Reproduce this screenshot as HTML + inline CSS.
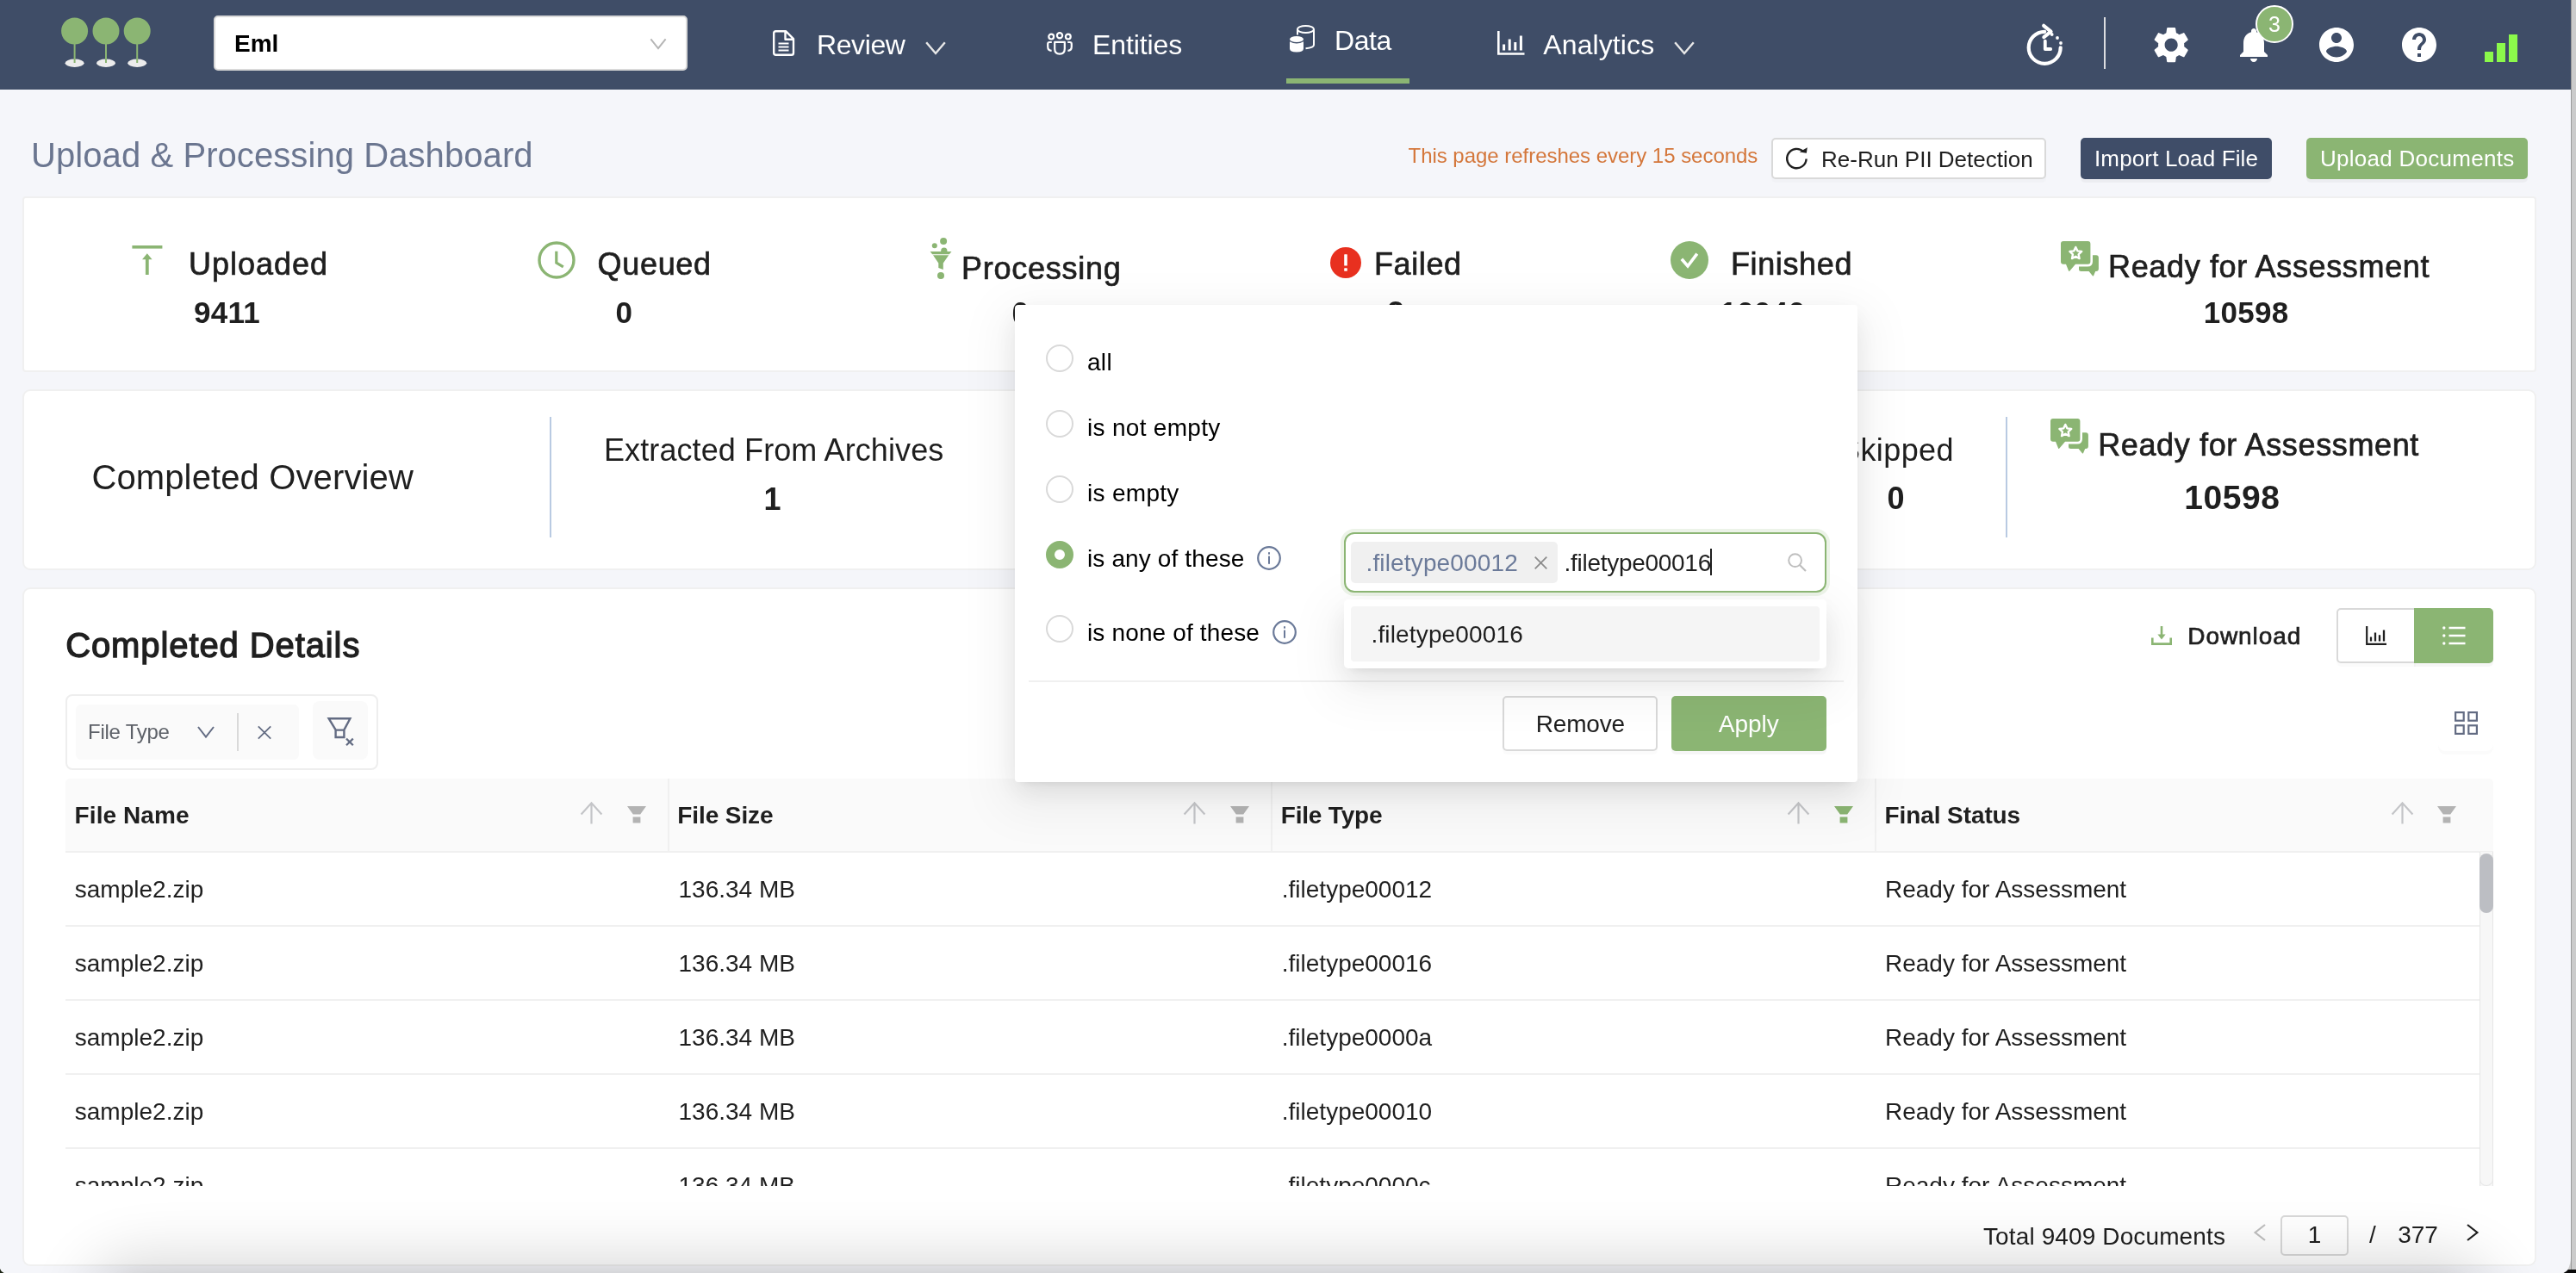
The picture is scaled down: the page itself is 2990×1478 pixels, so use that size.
<!DOCTYPE html>
<html lang="en">
<head>
<meta charset="utf-8">
<title>Upload &amp; Processing Dashboard</title>
<style>
*{box-sizing:border-box;margin:0;padding:0}
html,body{width:2990px;height:1478px;overflow:hidden;background:#f5f6fa}
body{position:relative;font-family:"Liberation Sans",Arial,Helvetica,sans-serif;color:#1f1f1f;-webkit-font-smoothing:antialiased}
.a{position:absolute;white-space:nowrap}
.t{position:absolute;white-space:nowrap;line-height:1}
svg{position:absolute;overflow:visible}
#nav{left:0;top:0;width:2990px;height:104px;background:#3f4d67}
.nt{font-size:32px;color:#fff}
.card{background:#fff;border:2px solid #eeeeef;border-radius:10px}
.lbl{font-size:36px;color:#1f1f1f}
.val{font-size:36px;font-weight:700;color:#1f1f1f}
.th{font-size:28px;font-weight:700;color:#1f1f1f}
.td{font-size:28px;color:#1f1f1f}
.rl{height:2px;background:#ededed;left:77px;width:2801px}
.opt{font-size:28px;color:#1f1f1f}
.radio{width:32px;height:32px;border-radius:50%;border:2px solid #d9d9d9;background:#fff}
</style>
</head>
<body>

<div id="wrap" class="a" style="left:0;top:0;width:2990px;height:1478px;will-change:transform">
<div id="nav" class="a"></div>

<svg style="left:0px;top:0px" width="200" height="104" viewBox="0 0 200 104" ><ellipse cx="86.6" cy="73.3" rx="11" ry="4.7" fill="#ececec"/><rect x="85.6" y="50" width="2" height="23" fill="#8bb573"/><circle cx="86.6" cy="36" r="15.5" fill="#8bb573"/><ellipse cx="123" cy="73.3" rx="11" ry="4.7" fill="#ececec"/><rect x="122" y="50" width="2" height="23" fill="#8bb573"/><circle cx="123" cy="36" r="15.5" fill="#8bb573"/><ellipse cx="159.2" cy="73.3" rx="11" ry="4.7" fill="#ececec"/><rect x="158.2" y="50" width="2" height="23" fill="#8bb573"/><circle cx="159.2" cy="36" r="15.5" fill="#8bb573"/></svg>
<div class="a" style="left:248px;top:18px;width:550px;height:64px;background:#fff;border:2px solid #d9d9d9;border-radius:5px"></div>
<div class="t" style="left:272px;top:37.3px;font-size:28px;font-weight:700;color:#000;">Eml</div>
<svg style="left:754px;top:43.5px" width="20" height="14.5" viewBox="0 0 22 16" ><path d="M1.5 1.5 L11 13.5 L20.5 1.5" fill="none" stroke="#b5b5b5" stroke-width="2.2"/></svg>
<svg style="left:897px;top:35px" width="26" height="30" viewBox="0 0 26 30" ><path d="M3.5 1.2 H15 L24 10.2 V26.5 Q24 28.8 21.7 28.8 H3.5 Q1.2 28.8 1.2 26.5 V3.5 Q1.2 1.2 3.5 1.2 Z M14.5 1.5 V10.8 H23.8" fill="none" stroke="#fff" stroke-width="2.4" stroke-linejoin="round"/><path d="M6.5 15.5 H18.5 M6.5 19.5 H18.5 M6.5 23.5 H18.5" stroke="#fff" stroke-width="2.2" fill="none"/></svg>
<div class="t" style="left:948px;top:35.9px;font-size:32px;color:#ffffff;letter-spacing:-0.4px">Review</div>
<svg style="left:1074px;top:48px" width="24" height="16" viewBox="0 0 24 16" ><path d="M1.2 1.2 L12 14 L22.8 1.2" fill="none" stroke="#e8e8e8" stroke-width="2.4"/></svg>
<svg style="left:1215px;top:37px" width="30" height="27" viewBox="0 0 30 27" ><g fill="none" stroke="#fff" stroke-width="2.2"><circle cx="5.2" cy="5.6" r="2.9"/><circle cx="15" cy="4.2" r="3.1"/><circle cx="24.8" cy="5.6" r="2.9"/><path d="M9.2 11.8 H20.8 V19.5 Q20.8 25.6 15 25.6 Q9.2 25.6 9.2 19.5 Z" stroke-linejoin="round"/><path d="M5.8 12 H3.2 Q1.2 12 1.2 14 V17.2 Q1.2 21.6 5.6 21.9"/><path d="M24.2 12 H26.8 Q28.8 12 28.8 14 V17.2 Q28.8 21.6 24.4 21.9"/></g></svg>
<div class="t" style="left:1268px;top:35.9px;font-size:32px;color:#ffffff;letter-spacing:-0.1px">Entities</div>
<svg style="left:1496px;top:29px" width="31" height="33" viewBox="0 0 31 33" ><g fill="none" stroke="#fff" stroke-width="2"><ellipse cx="19.5" cy="5" rx="9.5" ry="4"/><path d="M10 5 V11.5 M29 5 V23 Q29 26.5 19.5 27.2"/></g><g fill="#fff"><ellipse cx="9" cy="16.5" rx="8" ry="3.6"/><path d="M1 19.2 Q9 23.6 17 19.2 V27.6 Q17 31.5 9 31.5 Q1 31.5 1 27.6 Z"/></g></svg>
<div class="t" style="left:1549px;top:30.9px;font-size:32px;color:#ffffff;letter-spacing:-0.4px">Data</div>
<div class="a" style="left:1493px;top:91px;width:143px;height:6px;background:#8bb573"></div>
<svg style="left:1738px;top:36px" width="32" height="28" viewBox="0 0 32 28" ><path d="M1.3 0 V26.5 H31.5" fill="none" stroke="#fff" stroke-width="2.6"/><path d="M7.6 15.5 V22.5 M14.2 9.5 V22.5 M20.8 13 V22.5 M27.4 5.5 V22.5" stroke="#fff" stroke-width="3" fill="none"/></svg>
<div class="t" style="left:1791.3px;top:35.9px;font-size:32px;color:#ffffff;letter-spacing:0.1px">Analytics</div>
<svg style="left:1943px;top:48px" width="24" height="16" viewBox="0 0 24 16" ><path d="M1.2 1.2 L12 14 L22.8 1.2" fill="none" stroke="#e8e8e8" stroke-width="2.4"/></svg>
<svg style="left:2350px;top:27px" width="44" height="50" viewBox="0 0 44 50" ><g fill="none" stroke="#fff" stroke-width="4.2" stroke-linecap="round" stroke-linejoin="round"><path d="M23.2 9.8 A18.5 18.5 0 1 0 41.7 28.3"/><path d="M22.2 2.8 L30.5 9.6 L22.4 16.1"/><path d="M23.8 20.6 V30 H30.2" stroke-width="3.8"/></g><g fill="#fff"><circle cx="31.7" cy="13" r="1.9"/><circle cx="38" cy="17" r="1.9"/><circle cx="42" cy="23" r="1.9"/></g></svg>
<div class="a" style="left:2442px;top:20px;width:2px;height:60px;background:#dcdde0"></div>
<svg style="left:2494.65px;top:26.95px" width="50.3" height="50.3" viewBox="0 0 24 24" ><path fill="#fff" d="M19.14 12.94c.04-.3.06-.61.06-.94 0-.32-.02-.64-.07-.94l2.03-1.58c.18-.14.23-.41.12-.61l-1.92-3.32c-.12-.22-.37-.29-.59-.22l-2.39.96c-.5-.38-1.03-.7-1.62-.94l-.36-2.54c-.04-.24-.24-.41-.48-.41h-3.84c-.24 0-.43.17-.47.41l-.36 2.54c-.59.24-1.13.57-1.62.94l-2.39-.96c-.22-.08-.47 0-.59.22L2.74 8.87c-.12.21-.08.47.12.61l2.03 1.58c-.05.3-.09.63-.09.94s.02.64.07.94l-2.03 1.58c-.18.14-.23.41-.12.61l1.92 3.32c.12.22.37.29.59.22l2.39-.96c.5.38 1.03.7 1.62.94l.36 2.54c.05.24.24.41.48.41h3.84c.24 0 .44-.17.47-.41l.36-2.54c.59-.24 1.13-.56 1.62-.94l2.39.96c.22.08.47 0 .59-.22l1.92-3.32c.12-.22.07-.47-.12-.61l-2.01-1.58zM12 15.6c-1.98 0-3.6-1.62-3.6-3.6s1.62-3.6 3.6-3.6 3.6 1.62 3.6 3.6-1.62 3.6-3.6 3.6z"/></svg>
<svg style="left:2592px;top:28px" width="48" height="48" viewBox="0 0 24 24" ><path fill="#fff" d="M12 22c1.1 0 2-.9 2-2h-4c0 1.1.89 2 2 2zm6-6v-5c0-3.07-1.64-5.64-4.5-6.32V4c0-.83-.67-1.5-1.5-1.5s-1.5.67-1.5 1.5v.68C7.63 5.36 6 7.92 6 11v5l-2 2v1h16v-1l-2-2z"/></svg>
<div class="a" style="left:2618px;top:6px;width:44px;height:44px;background:#8bb573;border:2px solid #fff;border-radius:50%"></div>
<div class="t" style="left:2040px;width:1200px;text-align:center;top:15.8px;font-size:25px;color:#ffffff;">3</div>
<svg style="left:2688px;top:28px" width="48" height="48" viewBox="0 0 24 24" ><path fill="#fff" d="M12 2C6.48 2 2 6.48 2 12s4.48 10 10 10 10-4.48 10-10S17.52 2 12 2zm0 3c1.66 0 3 1.34 3 3s-1.34 3-3 3-3-1.34-3-3 1.34-3 3-3zm0 14.2c-2.5 0-4.71-1.28-6-3.22.03-1.99 4-3.08 6-3.08 1.99 0 5.97 1.09 6 3.08-1.29 1.94-3.5 3.22-6 3.22z"/></svg>
<svg style="left:2784px;top:28px" width="48" height="48" viewBox="0 0 24 24" ><path fill="#fff" d="M12 2C6.48 2 2 6.48 2 12s4.48 10 10 10 10-4.48 10-10S17.52 2 12 2zm1 17h-2v-2h2v2zm2.07-7.75l-.9.92C13.45 12.9 13 13.5 13 15h-2v-.5c0-1.1.45-2.1 1.17-2.83l1.24-1.26c.37-.36.59-.86.59-1.41 0-1.1-.9-2-2-2s-2 .9-2 2H8c0-2.21 1.79-4 4-4s4 1.79 4 4c0 .88-.36 1.68-.93 2.25z"/></svg>
<svg style="left:2884px;top:40px" width="38" height="32" viewBox="0 0 38 32" ><rect x="0" y="20" width="10" height="12" fill="#8bf94b"/><rect x="14" y="10" width="10" height="22" fill="#8bf94b"/><rect x="28" y="0" width="10" height="32" fill="#8bf94b"/></svg>

<div class="t" style="left:36px;top:160.1px;font-size:40px;color:#6b7690;letter-spacing:0.08px">Upload &amp; Processing Dashboard</div>
<div class="t" style="left:1634.5px;top:168.7px;font-size:24px;color:#d4773b;letter-spacing:-0.03px">This page refreshes every 15 seconds</div>
<div class="a" style="left:2056px;top:160px;width:319px;height:48px;background:#fff;border:2px solid #d9d9d9;border-radius:5px;box-shadow:0 4px 0 rgba(0,0,0,0.016)"></div>
<svg style="left:2072px;top:170px" width="27" height="27" viewBox="0 0 27 27" ><path d="M21.2 6.0 A11.2 11.2 0 1 0 24.6 14.5" fill="none" stroke="#1f1f1f" stroke-width="2.4"/><path d="M17 7.2 H25.2 V0.6 Z" fill="#1f1f1f" transform="rotate(8 21 5)"/></svg>
<div class="t" style="left:2114px;top:172.0px;font-size:26px;color:#1f1f1f;">Re-Run PII Detection</div>
<div class="a" style="left:2415px;top:160px;width:222px;height:48px;background:#3f4d68;border-radius:5px;box-shadow:0 4px 0 rgba(0,0,0,0.035)"></div>
<div class="t" style="left:2431px;top:171.0px;font-size:26px;color:#fff;letter-spacing:0.14px">Import Load File</div>
<div class="a" style="left:2677px;top:160px;width:257px;height:48px;background:#8bb573;border-radius:5px;box-shadow:0 4px 0 rgba(0,0,0,0.035)"></div>
<div class="t" style="left:2693px;top:171.0px;font-size:26px;color:#fff;letter-spacing:0.27px">Upload Documents</div>

<div class="a" style="left:26px;top:228px;width:2918px;height:204px;background:#fff;border:2px solid #f0f0f0;border-radius:4px"></div>
<svg style="left:153px;top:284px" width="36" height="36" viewBox="0 0 36 36" ><rect x="0.4" y="1" width="35" height="3.6" fill="#8bb573"/><path d="M17.8 10.2 L23.6 17.2 H19.7 V35 H15.9 V17.2 H12 Z" fill="#8bb573"/></svg>
<div class="t" style="left:219px;top:288.5px;font-size:36px;color:#1f1f1f;letter-spacing:1px;-webkit-text-stroke:0.7px #1f1f1f">Uploaded</div>
<div class="t" style="left:225px;top:345.4px;font-size:35px;font-weight:700;color:#1f1f1f;letter-spacing:0.3px">9411</div>
<svg style="left:624px;top:280px" width="44" height="44" viewBox="0 0 44 44" ><circle cx="22" cy="22" r="20" fill="none" stroke="#8bb573" stroke-width="3.4"/><path d="M21.8 11.8 V25 L29.8 29.8" fill="none" stroke="#8bb573" stroke-width="3.2"/></svg>
<div class="t" style="left:693.5px;top:288.5px;font-size:36px;color:#1f1f1f;letter-spacing:0.7px;-webkit-text-stroke:0.7px #1f1f1f">Queued</div>
<div class="t" style="left:124.20000000000005px;width:1200px;text-align:center;top:345.4px;font-size:35px;font-weight:700;color:#1f1f1f;">0</div>
<svg style="left:1079px;top:276px" width="26" height="48" viewBox="0 0 26 48" ><g fill="#8bb573"><circle cx="16.1" cy="3.9" r="4"/><circle cx="5.8" cy="9.2" r="3"/><circle cx="16.8" cy="15.2" r="3.6"/><path d="M0.6 16.1 H25.5 L22.9 19.3 H3.2 Z"/><path d="M4 20.3 H22.2 L15.8 29.4 V36.9 L10.3 34.9 V29.4 Z"/><circle cx="13" cy="44" r="4"/></g></svg>
<div class="t" style="left:1116px;top:293.5px;font-size:36px;color:#1f1f1f;letter-spacing:0.75px;-webkit-text-stroke:0.7px #1f1f1f">Processing</div>
<div class="t" style="left:584.5999999999999px;width:1200px;text-align:center;top:346.5px;font-size:36px;font-weight:700;color:#1f1f1f;">0</div>
<svg style="left:1544px;top:286.6px" width="36" height="36" viewBox="0 0 36 36" ><circle cx="18" cy="18" r="18" fill="#e8301f"/><rect x="16.2" y="8.2" width="3.6" height="13.4" rx="0.6" fill="#fff"/><rect x="16.2" y="24.2" width="3.6" height="3.6" rx="0.6" fill="#fff"/></svg>
<div class="t" style="left:1595px;top:288.5px;font-size:36px;color:#1f1f1f;letter-spacing:0.6px;-webkit-text-stroke:0.7px #1f1f1f">Failed</div>
<div class="t" style="left:1020px;width:1200px;text-align:center;top:344.4px;font-size:35px;font-weight:700;color:#1f1f1f;">2</div>
<svg style="left:1939px;top:280px" width="44" height="44" viewBox="0 0 44 44" ><circle cx="22" cy="22" r="22" fill="#8bb573"/><path d="M12.9 20.8 L20 29 L30.8 14.6" fill="none" stroke="#fff" stroke-width="3.6"/></svg>
<div class="t" style="left:2009px;top:288.5px;font-size:36px;color:#1f1f1f;letter-spacing:0.62px;-webkit-text-stroke:0.7px #1f1f1f">Finished</div>
<div class="t" style="left:1446px;width:1200px;text-align:center;top:345.4px;font-size:35px;font-weight:700;color:#1f1f1f;letter-spacing:0.3px">10040</div>
<svg style="left:2392px;top:279.7px" width="44" height="41" viewBox="0 0 44 41" ><g fill="#8bb573"><path d="M37 16.2 H41 Q43.9 16.2 43.9 19.2 V32 Q43.9 34.9 41 34.9 H40.2 L38 40.2 Q37.5 41 36.9 40.2 L32.6 34.9 H23.6 Q21 34.9 21 32.4 V29.4 H31 Q37 29.4 37 23.4 Z"/><path d="M3 0 H31.4 Q34.4 0 34.4 3 V23.8 Q34.4 26.8 31.4 26.8 H17 L10.4 34.6 Q9.6 35.4 9.1 34.4 L6 26.8 H3 Q0 26.8 0 23.8 V3 Q0 0 3 0 Z"/></g><path d="M17.30 6.90 L19.36 11.37 L24.24 11.94 L20.63 15.28 L21.59 20.11 L17.30 17.70 L13.01 20.11 L13.97 15.28 L10.36 11.94 L15.24 11.37 Z" fill="none" stroke="#fff" stroke-width="2.4" stroke-linejoin="round"/></svg>
<div class="t" style="left:2447px;top:292.0px;font-size:36px;color:#1f1f1f;letter-spacing:0.65px;-webkit-text-stroke:0.7px #1f1f1f">Ready for Assessment</div>
<div class="t" style="left:2007.1999999999998px;width:1200px;text-align:center;top:345.4px;font-size:35px;font-weight:700;color:#1f1f1f;letter-spacing:0.3px">10598</div>

<div class="a" style="left:26px;top:452px;width:2918px;height:210px;background:#fff;border:2px solid #f0f0f0;border-radius:9px"></div>
<div class="t" style="left:106.4px;top:534.1px;font-size:40px;color:#1f1f1f;letter-spacing:0.13px">Completed Overview</div>
<div class="a" style="left:637.7px;top:484px;width:2px;height:140px;background:#b9cae2"></div>
<div class="t" style="left:701px;top:505.0px;font-size:36px;color:#1f1f1f;letter-spacing:0.1px">Extracted From Archives</div>
<div class="t" style="left:296.5px;width:1200px;text-align:center;top:561.5px;font-size:36px;font-weight:700;color:#1f1f1f;">1</div>
<div class="t" style="left:1601.5px;width:1200px;text-align:center;top:504.8px;font-size:36px;color:#1f1f1f;letter-spacing:0.4px">Skipped</div>
<div class="t" style="left:1600.5px;width:1200px;text-align:center;top:560.8px;font-size:36px;font-weight:700;color:#1f1f1f;">0</div>
<div class="a" style="left:2327.7px;top:484px;width:2px;height:140px;background:#b9cae2"></div>
<svg style="left:2380px;top:486.2px" width="44" height="41" viewBox="0 0 44 41" ><g fill="#8bb573"><path d="M37 16.2 H41 Q43.9 16.2 43.9 19.2 V32 Q43.9 34.9 41 34.9 H40.2 L38 40.2 Q37.5 41 36.9 40.2 L32.6 34.9 H23.6 Q21 34.9 21 32.4 V29.4 H31 Q37 29.4 37 23.4 Z"/><path d="M3 0 H31.4 Q34.4 0 34.4 3 V23.8 Q34.4 26.8 31.4 26.8 H17 L10.4 34.6 Q9.6 35.4 9.1 34.4 L6 26.8 H3 Q0 26.8 0 23.8 V3 Q0 0 3 0 Z"/></g><path d="M17.30 6.90 L19.36 11.37 L24.24 11.94 L20.63 15.28 L21.59 20.11 L17.30 17.70 L13.01 20.11 L13.97 15.28 L10.36 11.94 L15.24 11.37 Z" fill="none" stroke="#fff" stroke-width="2.4" stroke-linejoin="round"/></svg>
<div class="t" style="left:2435.2px;top:498.5px;font-size:36px;color:#1f1f1f;letter-spacing:0.63px;-webkit-text-stroke:0.7px #1f1f1f">Ready for Assessment</div>
<div class="t" style="left:1990.9px;width:1200px;text-align:center;top:557.6px;font-size:39px;font-weight:700;color:#1f1f1f;letter-spacing:0.6px">10598</div>

<div class="a" style="left:26px;top:682px;width:2918px;height:788px;background:#fff;border:2px solid #f0f0f0;border-radius:9px"></div>
<div class="t" style="left:76.2px;top:729.3px;font-size:40px;color:#1f1f1f;letter-spacing:0.9px;-webkit-text-stroke:1.3px #1f1f1f">Completed Details</div>
<svg style="left:2497px;top:727px" width="24" height="22" viewBox="0 0 24 22" ><path d="M1.3 13.5 V20.6 H22.7 V13.5" fill="none" stroke="#8bb573" stroke-width="2.6"/><path d="M12 0 V13" stroke="#8bb573" stroke-width="2.6" fill="none"/><path d="M7.4 9.6 H16.6 L12 15.4 Z" fill="#8bb573"/></svg>
<div class="t" style="left:2539.3px;top:724.9px;font-size:28px;color:#1f1f1f;letter-spacing:0.93px;-webkit-text-stroke:0.7px #1f1f1f">Download</div>
<div class="a" style="left:2712px;top:706px;width:92px;height:64px;background:#fff;border:2px solid #d9d9d9;border-radius:5px 0 0 5px;box-shadow:0 4px 0 rgba(0,0,0,0.016)"></div>
<div class="a" style="left:2802px;top:706px;width:92px;height:64px;background:#8bb573;border-radius:0 5px 5px 0;box-shadow:0 4px 0 rgba(0,0,0,0.035)"></div>
<svg style="left:2746px;top:727px" width="24" height="22" viewBox="0 0 24 22" ><path d="M1.2 0 V20.8 H24" fill="none" stroke="#1f1f1f" stroke-width="2.2"/><path d="M6 12.5 V17.6 M11 7.5 V17.6 M16 10.2 V17.6 M21 4.6 V17.6" stroke="#1f1f1f" stroke-width="2.3" fill="none"/></svg>
<svg style="left:2835px;top:727px" width="27" height="22" viewBox="0 0 27 22" ><path d="M7.5 2 H26.5 M7.5 11 H26.5 M7.5 20 H26.5" stroke="#fff" stroke-width="2.3" fill="none"/><circle cx="1.8" cy="2" r="1.7" fill="#fff"/><circle cx="1.8" cy="11" r="1.7" fill="#fff"/><circle cx="1.8" cy="20" r="1.7" fill="#fff"/></svg>
<div class="a" style="left:76px;top:806px;width:363px;height:88px;background:#fff;border:2px solid #eeeeee;border-radius:8px"></div>
<div class="a" style="left:88px;top:818px;width:259px;height:64px;background:#fafafa;border-radius:6px"></div>
<div class="t" style="left:102px;top:838.2px;font-size:24px;color:#5d6168;letter-spacing:-0.25px">File Type</div>
<svg style="left:229px;top:843px" width="20" height="14" viewBox="0 0 20 14" ><path d="M1 1 L10 12.6 L19 1" fill="none" stroke="#636c83" stroke-width="2"/></svg>
<div class="a" style="left:275px;top:828px;width:2px;height:44px;background:#d9d9d9"></div>
<svg style="left:299px;top:843px" width="16" height="15" viewBox="0 0 16 15" ><path d="M0.8 0.4 L15.2 14.6 M15.2 0.4 L0.8 14.6" fill="none" stroke="#636c83" stroke-width="1.8"/></svg>
<div class="a" style="left:363px;top:814px;width:64px;height:68px;background:#fafafa;border-radius:8px"></div>
<svg style="left:380px;top:833px" width="31" height="33" viewBox="0 0 31 33" ><path d="M1.6 1.2 H26.4 L19.4 14.4 V23 H9.6 V14.4 Z M9.6 14.6 H19.4" fill="none" stroke="#636c83" stroke-width="2.4" stroke-linejoin="miter"/><path d="M22 24.6 L29.8 32.2 M29.8 24.6 L22 32.2" stroke="#636c83" stroke-width="2.2" fill="none"/></svg>
<div class="a" style="left:2830px;top:808px;width:64px;height:64px;background:#fff;border-radius:8px;box-shadow:0 4px 0 rgba(0,0,0,0.016)"></div>
<svg style="left:2848.5px;top:825.5px" width="27" height="27" viewBox="0 0 27 27" ><g fill="none" stroke="#636c83" stroke-width="2.2"><rect x="1.1" y="1.1" width="9.6" height="9.6"/><rect x="16.3" y="1.1" width="9.6" height="9.6"/><rect x="1.1" y="16.3" width="9.6" height="9.6"/><rect x="16.3" y="16.3" width="9.6" height="9.6"/></g></svg>
<div class="a" style="left:76px;top:903.5px;width:2818px;height:86px;background:#fafafa;border-bottom:2px solid #f0f0f0;border-radius:5px 5px 0 0"></div>
<div class="t" style="left:86.6px;top:932.8px;font-size:28px;font-weight:700;color:#1f1f1f;letter-spacing:0.08px">File Name</div>
<svg style="left:674.0px;top:931.2px" width="25" height="26" viewBox="0 0 25 26" ><path d="M12.5 25.5 V1.8 M0.6 14.4 L12.5 1.3 L24.4 14.4" fill="none" stroke="#c4c5c8" stroke-width="2.2"/></svg>
<svg style="left:728.0px;top:936.3px" width="22" height="20" viewBox="0 0 22 20" ><path d="M0 0 H22 L15.2 9.6 H6.8 Z M6.6 12.6 H15.4 V19.4 H6.6 Z" fill="#b3b3b3"/></svg>
<div class="t" style="left:786.3px;top:932.8px;font-size:28px;font-weight:700;color:#1f1f1f;letter-spacing:-0.1px">File Size</div>
<div class="a" style="left:774.5px;top:903.5px;width:2px;height:84px;background:#f0f0f0"></div>
<svg style="left:1374.0px;top:931.2px" width="25" height="26" viewBox="0 0 25 26" ><path d="M12.5 25.5 V1.8 M0.6 14.4 L12.5 1.3 L24.4 14.4" fill="none" stroke="#c4c5c8" stroke-width="2.2"/></svg>
<svg style="left:1428.0px;top:936.3px" width="22" height="20" viewBox="0 0 22 20" ><path d="M0 0 H22 L15.2 9.6 H6.8 Z M6.6 12.6 H15.4 V19.4 H6.6 Z" fill="#b3b3b3"/></svg>
<div class="t" style="left:1486.8px;top:932.8px;font-size:28px;font-weight:700;color:#1f1f1f;letter-spacing:-0.2px">File Type</div>
<div class="a" style="left:1474.5px;top:903.5px;width:2px;height:84px;background:#f0f0f0"></div>
<svg style="left:2075.3px;top:931.2px" width="25" height="26" viewBox="0 0 25 26" ><path d="M12.5 25.5 V1.8 M0.6 14.4 L12.5 1.3 L24.4 14.4" fill="none" stroke="#c4c5c8" stroke-width="2.2"/></svg>
<svg style="left:2129.3px;top:936.3px" width="22" height="20" viewBox="0 0 22 20" ><path d="M0 0 H22 L15.2 9.6 H6.8 Z M6.6 12.6 H15.4 V19.4 H6.6 Z" fill="#8bb573"/></svg>
<div class="t" style="left:2187.6000000000004px;top:932.8px;font-size:28px;font-weight:700;color:#1f1f1f;letter-spacing:-0.1px">Final Status</div>
<div class="a" style="left:2175.8px;top:903.5px;width:2px;height:84px;background:#f0f0f0"></div>
<svg style="left:2775.5px;top:931.2px" width="25" height="26" viewBox="0 0 25 26" ><path d="M12.5 25.5 V1.8 M0.6 14.4 L12.5 1.3 L24.4 14.4" fill="none" stroke="#c4c5c8" stroke-width="2.2"/></svg>
<svg style="left:2828.7px;top:936.3px" width="22" height="20" viewBox="0 0 22 20" ><path d="M0 0 H22 L15.2 9.6 H6.8 Z M6.6 12.6 H15.4 V19.4 H6.6 Z" fill="#b3b3b3"/></svg>
<div class="a" style="left:76px;top:989px;width:2818px;height:388px;overflow:hidden"><div class="t" style="left:10.8px;top:29.6px;font-size:28px;color:#1f1f1f;">sample2.zip</div>
<div class="t" style="left:711.5px;top:29.6px;font-size:28px;color:#1f1f1f;">136.34 MB</div>
<div class="t" style="left:1411.8px;top:29.6px;font-size:28px;color:#1f1f1f;">.filetype00012</div>
<div class="t" style="left:2112px;top:29.6px;font-size:28px;color:#1f1f1f;">Ready for Assessment</div>
<div class="a" style="left:0px;top:85px;width:2802px;height:2px;background:#f0f0f0"></div>
<div class="t" style="left:10.8px;top:115.6px;font-size:28px;color:#1f1f1f;">sample2.zip</div>
<div class="t" style="left:711.5px;top:115.6px;font-size:28px;color:#1f1f1f;">136.34 MB</div>
<div class="t" style="left:1411.8px;top:115.6px;font-size:28px;color:#1f1f1f;">.filetype00016</div>
<div class="t" style="left:2112px;top:115.6px;font-size:28px;color:#1f1f1f;">Ready for Assessment</div>
<div class="a" style="left:0px;top:171px;width:2802px;height:2px;background:#f0f0f0"></div>
<div class="t" style="left:10.8px;top:201.6px;font-size:28px;color:#1f1f1f;">sample2.zip</div>
<div class="t" style="left:711.5px;top:201.6px;font-size:28px;color:#1f1f1f;">136.34 MB</div>
<div class="t" style="left:1411.8px;top:201.6px;font-size:28px;color:#1f1f1f;">.filetype0000a</div>
<div class="t" style="left:2112px;top:201.6px;font-size:28px;color:#1f1f1f;">Ready for Assessment</div>
<div class="a" style="left:0px;top:257px;width:2802px;height:2px;background:#f0f0f0"></div>
<div class="t" style="left:10.8px;top:287.6px;font-size:28px;color:#1f1f1f;">sample2.zip</div>
<div class="t" style="left:711.5px;top:287.6px;font-size:28px;color:#1f1f1f;">136.34 MB</div>
<div class="t" style="left:1411.8px;top:287.6px;font-size:28px;color:#1f1f1f;">.filetype00010</div>
<div class="t" style="left:2112px;top:287.6px;font-size:28px;color:#1f1f1f;">Ready for Assessment</div>
<div class="a" style="left:0px;top:343px;width:2802px;height:2px;background:#f0f0f0"></div>
<div class="t" style="left:10.8px;top:373.6px;font-size:28px;color:#1f1f1f;">sample2.zip</div>
<div class="t" style="left:711.5px;top:373.6px;font-size:28px;color:#1f1f1f;">136.34 MB</div>
<div class="t" style="left:1411.8px;top:373.6px;font-size:28px;color:#1f1f1f;">.filetype0000c</div>
<div class="t" style="left:2112px;top:373.6px;font-size:28px;color:#1f1f1f;">Ready for Assessment</div>
<div class="a" style="left:0px;top:429px;width:2802px;height:2px;background:#f0f0f0"></div>
<div class="a" style="left:2801.5px;top:0px;width:16.5px;height:400px;background:#f7f7f7;border-left:1.5px solid #e6e6e6;border-right:1.5px solid #e6e6e6;border-radius:0 0 8px 8px"></div>
<div class="a" style="left:2801.7px;top:1.5px;width:16px;height:69.5px;background:#bcbec3;border-radius:8px"></div>
</div>
<div class="a" style="left:2877.5px;top:1360px;width:16.5px;height:17px;border:1.5px solid #e6e6e6;border-top:none;border-radius:0 0 8px 8px"></div>
<div class="t" style="left:2302px;top:1422.3px;font-size:28px;color:#1f1f1f;letter-spacing:0.12px">Total 9409 Documents</div>
<svg style="left:2616px;top:1420.5px" width="14" height="20" viewBox="0 0 14 20" ><path d="M13 1 L1.6 10 L13 19" fill="none" stroke="#bfbfbf" stroke-width="2.2"/></svg>
<div class="a" style="left:2646.5px;top:1410.5px;width:79px;height:47px;background:#fff;border:2px solid #d9d9d9;border-radius:5px"></div>
<div class="t" style="left:2086.6px;width:1200px;text-align:center;top:1420.0px;font-size:28px;color:#1f1f1f;">1</div>
<div class="t" style="left:2154px;width:1200px;text-align:center;top:1420.0px;font-size:28px;color:#1f1f1f;">/</div>
<div class="t" style="left:2206.5px;width:1200px;text-align:center;top:1420.0px;font-size:28px;color:#1f1f1f;">377</div>
<svg style="left:2863px;top:1420.5px" width="14" height="20" viewBox="0 0 14 20" ><path d="M1 1 L12.4 10 L1 19" fill="none" stroke="#1f1f1f" stroke-width="2.2"/></svg>

<div class="a" style="left:1178px;top:354px;width:978px;height:554px;background:#fff;border-radius:4px;box-shadow:0 6px 12px -8px rgba(0,0,0,.12),0 12px 32px 0 rgba(0,0,0,.08),0 18px 56px 16px rgba(0,0,0,.05)"></div>
<div class="a" style="left:1214px;top:399.8px;width:32px;height:32px;border-radius:50%;background:#fff;border:2px solid #d9d9d9"></div>
<div class="t" style="left:1262px;top:406.7px;font-size:28px;color:#000;letter-spacing:0.3px">all</div>
<div class="a" style="left:1214px;top:475.9px;width:32px;height:32px;border-radius:50%;background:#fff;border:2px solid #d9d9d9"></div>
<div class="t" style="left:1262px;top:483.1px;font-size:28px;color:#000;letter-spacing:0.3px">is not empty</div>
<div class="a" style="left:1214px;top:551.8px;width:32px;height:32px;border-radius:50%;background:#fff;border:2px solid #d9d9d9"></div>
<div class="t" style="left:1262px;top:558.8px;font-size:28px;color:#000;letter-spacing:0.3px">is empty</div>
<div class="a" style="left:1214px;top:628px;width:32px;height:32px;border-radius:50%;background:#fff;border:10px solid #8bb573"></div>
<div class="t" style="left:1262px;top:634.8px;font-size:28px;color:#000;letter-spacing:0.13px">is any of these</div>
<div class="a" style="left:1214px;top:714.2px;width:32px;height:32px;border-radius:50%;background:#fff;border:2px solid #d9d9d9"></div>
<div class="t" style="left:1262px;top:720.9px;font-size:28px;color:#000;letter-spacing:0.15px">is none of these</div>
<svg style="left:1459.1px;top:634px" width="28" height="28" viewBox="0 0 28 28" ><circle cx="14" cy="14" r="12.8" fill="none" stroke="#6b7a99" stroke-width="2.2"/><rect x="13" y="11.6" width="2" height="9.2" fill="#6b7a99"/><rect x="13" y="7.2" width="2" height="2.4" fill="#6b7a99"/></svg>
<svg style="left:1476.9px;top:720px" width="28" height="28" viewBox="0 0 28 28" ><circle cx="14" cy="14" r="12.8" fill="none" stroke="#6b7a99" stroke-width="2.2"/><rect x="13" y="11.6" width="2" height="9.2" fill="#6b7a99"/><rect x="13" y="7.2" width="2" height="2.4" fill="#6b7a99"/></svg>
<div class="a" style="left:1194px;top:789.5px;width:946px;height:2px;background:#f0f0f0"></div>
<div class="a" style="left:1743.5px;top:808px;width:180.5px;height:64px;background:#fff;border:2px solid #d9d9d9;border-radius:5px;box-shadow:0 4px 0 rgba(0,0,0,0.016)"></div>
<div class="t" style="left:1234.3px;width:1200px;text-align:center;top:826.6px;font-size:28px;color:#1f1f1f;letter-spacing:-0.2px">Remove</div>
<div class="a" style="left:1940px;top:808px;width:180px;height:64px;background:#8bb573;border-radius:5px;box-shadow:0 4px 0 rgba(0,0,0,0.035)"></div>
<div class="t" style="left:1429.8px;width:1200px;text-align:center;top:826.6px;font-size:28px;color:#fff;">Apply</div>
<div class="a" style="left:1560px;top:696px;width:560px;height:80px;background:#fff;border-radius:5px;box-shadow:0 6px 12px -8px rgba(0,0,0,.12),0 12px 32px 0 rgba(0,0,0,.08),0 18px 56px 16px rgba(0,0,0,.05)"></div>
<div class="a" style="left:1568px;top:704px;width:544px;height:64px;background:#f5f5f5;border-radius:4px"></div>
<div class="t" style="left:1591.5px;top:722.9px;font-size:28px;color:#1f1f1f;letter-spacing:0.15px">.filetype00016</div>
<div class="a" style="left:1560px;top:618px;width:560px;height:70px;background:#fff;border:2px solid #8bb573;border-radius:12px;box-shadow:0 0 0 4px rgba(139,181,115,0.16)"></div>
<div class="a" style="left:1568px;top:629px;width:240px;height:48px;background:#f0f0f0;border-radius:5px"></div>
<div class="t" style="left:1585.5px;top:639.9px;font-size:28px;color:#6b7a99;letter-spacing:0.15px">.filetype00012</div>
<svg style="left:1781px;top:646px" width="15" height="15" viewBox="0 0 15 15" ><path d="M0.7 0.7 L14.3 14.3 M14.3 0.7 L0.7 14.3" stroke="#8c8c8c" stroke-width="1.8" fill="none"/></svg>
<div class="t" style="left:1815.5px;top:639.9px;font-size:28px;color:#1f1f1f;letter-spacing:-0.28px">.filetype00016</div>
<div class="a" style="left:1985px;top:637px;width:2px;height:31px;background:#1f1f1f"></div>
<svg style="left:2075px;top:642px" width="22" height="22" viewBox="0 0 22 22" ><circle cx="8.6" cy="8.6" r="7.4" fill="none" stroke="#bfbfbf" stroke-width="2"/><path d="M14 14 L21 21" stroke="#bfbfbf" stroke-width="2.2" fill="none"/></svg>

<div class="a" style="left:130px;top:1492px;width:2735px;height:60px;background:#000;border-radius:30px;box-shadow:0 0 70px 30px rgba(0,0,0,0.16),0 0 24px 6px rgba(0,0,0,0.1)"></div>
<div class="a" style="left:2984px;top:0px;width:6px;height:1474px;background:#cbcbcb;border-left:1.5px solid #9a9a9a"></div>
<svg style="left:2960px;top:1450px" width="30" height="28" viewBox="0 0 30 28" ><path d="M24 8 V24 H20.5 Q24 18 24 8 Z" fill="#cbcbcb"/><path d="M15.5 28 Q19 26.5 20.8 24 H30 V28 Z" fill="#0a0a0a"/></svg>
<svg style="left:0px;top:1468px" width="10" height="10" viewBox="0 0 10 10" ><path d="M0 5 Q1 8.5 4.6 10 H0 Z" fill="#1c2414"/></svg>

</div>
</body>
</html>
